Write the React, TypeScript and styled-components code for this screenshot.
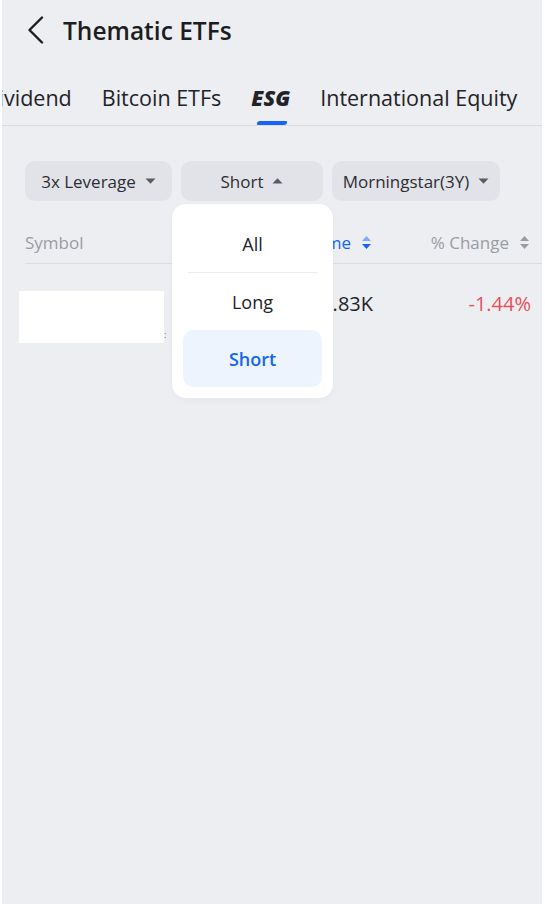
import React from "react";
import styled, { createGlobalStyle } from "styled-components";

const Global = createGlobalStyle`
  html, body { margin: 0; padding: 0; background: #ffffff; }
  body { font-family: "Open Sans", "Noto Sans", Arial, sans-serif; -webkit-font-smoothing: antialiased; }
  * { box-sizing: border-box; }
`;

const Page = styled.div`
  margin: 0 3px 0 2px;
  min-height: 904px;
  background: #edeef1;
  overflow: hidden;
`;

const TopBar = styled.div`
  height: 60px;
  display: flex;
  align-items: center;
  gap: 17px;
  padding-left: 24px;
`;

const BackButton = styled.button`
  border: 0;
  background: none;
  padding: 0;
  display: flex;
  align-items: center;
  cursor: pointer;
`;

const Title = styled.h1`
  margin: 0;
  font-size: 24.5px;
  font-weight: 600;
  color: #1c1d21;
`;

const TabStrip = styled.div`
  margin-top: 12px;
  height: 54px;
  border-bottom: 1px solid #dcdde1;
  overflow: hidden;
`;

const TabTrack = styled.div<{ $offset: number }>`
  display: flex;
  gap: 30px;
  height: 100%;
  margin-left: ${(p) => -p.$offset}px;
  white-space: nowrap;
`;

const Tab = styled.div<{ $active?: boolean }>`
  position: relative;
  display: flex;
  align-items: center;
  padding-bottom: 2px;
  font-size: 21.5px;
  color: #222328;
  font-weight: ${(p) => (p.$active ? 800 : 400)};
  font-style: ${(p) => (p.$active ? "italic" : "normal")};
  &::after {
    content: "";
    display: ${(p) => (p.$active ? "block" : "none")};
    position: absolute;
    left: 50%;
    bottom: 0;
    width: 30px;
    height: 4px;
    margin-left: -14px;
    background: #1464f6;
    border-radius: 2px;
    transform: skewX(-20deg);
  }
`;

const FilterRow = styled.div`
  display: flex;
  gap: 9px;
  padding: 35px 0 0 23px;
`;

const ChipWrap = styled.div`
  position: relative;
`;

const Chip = styled.div<{ $w: number }>`
  width: ${(p) => p.$w}px;
  height: 40px;
  border-radius: 10px;
  background: #e2e3e8;
  display: flex;
  align-items: center;
  justify-content: center;
  gap: 9px;
  font-size: 17px;
  color: #2d2e33;
`;

const Caret = styled.svg`
  width: 11px;
  height: 6px;
  flex: none;
`;

const Menu = styled.div`
  position: absolute;
  top: 43px;
  left: -9px;
  width: 161px;
  padding: 11px;
  background: #ffffff;
  border-radius: 14px;
  box-shadow: 0 2px 10px rgba(0, 0, 0, 0.03);
  z-index: 5;
`;

const MenuItem = styled.div<{ $selected?: boolean }>`
  height: 57px;
  display: flex;
  align-items: center;
  justify-content: center;
  border-radius: 10px;
  font-size: 18px;
  font-weight: ${(p) => (p.$selected ? 600 : 400)};
  color: ${(p) => (p.$selected ? "#1464f6" : "#222328")};
  background: ${(p) => (p.$selected ? "#eef4fe" : "transparent")};
`;

const MenuDivider = styled.div`
  height: 1px;
  margin: 0 5px;
  background: #ececee;
`;

const Table = styled.div`
  padding-left: 23px;
  margin-top: 21px;
`;

const HeaderRow = styled.div`
  display: grid;
  grid-template-columns: 1fr 120px 158px;
  height: 42px;
  align-items: center;
  border-bottom: 1px solid #dcdde1;
  padding-right: 12px;
`;

const HeadCell = styled.div<{ $align?: "left" | "right"; $active?: boolean }>`
  display: flex;
  align-items: center;
  justify-content: ${(p) => (p.$align === "right" ? "flex-end" : "flex-start")};
  gap: 10px;
  font-size: 17px;
  color: ${(p) => (p.$active ? "#1464f6" : "#9a9ca3")};
`;

const SortIcon = styled.svg`
  width: 11px;
  height: 15px;
  flex: none;
`;

const DataRow = styled.div`
  display: grid;
  grid-template-columns: 1fr 120px 158px;
  align-items: start;
  padding: 27px 11px 0 0;
`;

const SymbolCell = styled.div`
  display: flex;
  align-items: flex-end;
`;

const Redacted = styled.div`
  width: 145px;
  height: 52px;
  margin-left: -6px;
  background: #ffffff;
`;

const Dots = styled.span`
  font-size: 9px;
  color: #6d6f76;
  line-height: 1;
  margin-bottom: 4px;
`;

const ValueCell = styled.div<{ $tone?: "down" }>`
  text-align: right;
  font-size: 20px;
  line-height: 26px;
  color: ${(p) => (p.$tone === "down" ? "#e5535c" : "#222328")};
`;

const DownCaret = () => (
  <Caret viewBox="0 0 11 6">
    <path d="M0.5 0.5h10L5.5 5.8z" fill="#5a5c63" />
  </Caret>
);
const UpCaret = () => (
  <Caret viewBox="0 0 11 6">
    <path d="M0.5 5.5h10L5.5 0.2z" fill="#5a5c63" />
  </Caret>
);

const Sort = ({ up, down }: { up: string; down: string }) => (
  <SortIcon viewBox="0 0 11 15">
    <path d="M1 6h9L5.5 1z" fill={up} />
    <path d="M1 9h9L5.5 14z" fill={down} />
  </SortIcon>
);

export default function App() {
  return (
    <>
      <Global />
      <Page>
        <TopBar>
          <BackButton aria-label="Back">
            <svg width="20" height="28" viewBox="0 0 20 28">
              <path d="M16 1.5L3.5 14L16 26.5" fill="none" stroke="#1c1d21" strokeWidth="2.4" strokeLinecap="round" strokeLinejoin="round" />
            </svg>
          </BackButton>
          <Title>Thematic ETFs</Title>
        </TopBar>

        <TabStrip>
          <TabTrack $offset={19}>
            <Tab>Dividend</Tab>
            <Tab>Bitcoin ETFs</Tab>
            <Tab $active>ESG</Tab>
            <Tab>International Equity</Tab>
          </TabTrack>
        </TabStrip>

        <FilterRow>
          <Chip $w={147}>
            3x Leverage <DownCaret />
          </Chip>
          <ChipWrap>
            <Chip $w={142}>
              Short <UpCaret />
            </Chip>
            <Menu>
              <MenuItem>All</MenuItem>
              <MenuDivider />
              <MenuItem>Long</MenuItem>
              <MenuItem $selected>Short</MenuItem>
            </Menu>
          </ChipWrap>
          <Chip $w={168}>
            Morningstar(3Y) <DownCaret />
          </Chip>
        </FilterRow>

        <Table>
          <HeaderRow>
            <HeadCell>Symbol</HeadCell>
            <HeadCell $align="right" $active>
              Volume <Sort up="#7ea8f8" down="#1464f6" />
            </HeadCell>
            <HeadCell $align="right">
              % Change <Sort up="#9a9ca3" down="#9a9ca3" />
            </HeadCell>
          </HeaderRow>
          <DataRow>
            <SymbolCell>
              <Redacted />
              <Dots>:</Dots>
            </SymbolCell>
            <ValueCell>1.83K</ValueCell>
            <ValueCell $tone="down">-1.44%</ValueCell>
          </DataRow>
        </Table>
      </Page>
    </>
  );
}
